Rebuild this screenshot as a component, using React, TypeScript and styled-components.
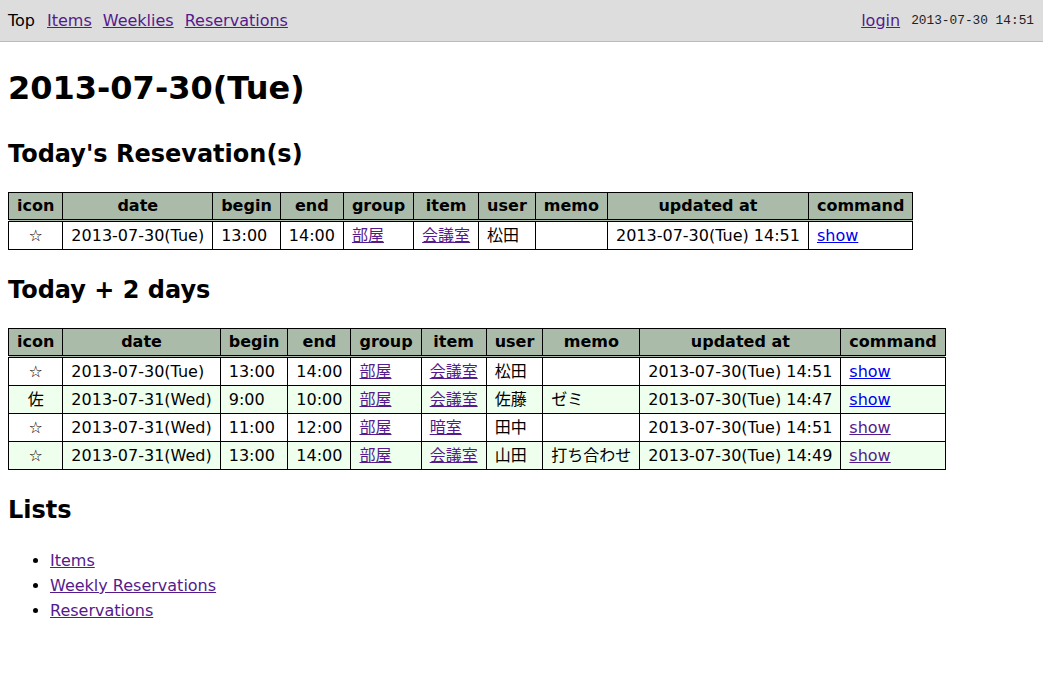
import React from "react";
import styled, { createGlobalStyle } from "styled-components";

const GlobalStyle = createGlobalStyle`
  body {
    margin: 0;
    background: #fff;
    color: #000;
    font-family: "DejaVu Sans", "Noto Sans CJK JP", sans-serif;
    font-size: 16px;
    line-height: 1.5;
  }
`;

const NavBar = styled.div`
  display: flex;
  justify-content: space-between;
  align-items: center;
  height: 41px;
  padding: 0 9px 0 8px;
  background: #dddddd;
  border-bottom: 1px solid #bbbbbb;
`;

const NavGroup = styled.div`
  display: flex;
  align-items: center;
  gap: 11px;
`;

const NavTop = styled.span`
  margin-right: 1px;
`;

const Link = styled.a<{ $fresh?: boolean }>`
  color: ${(p) => (p.$fresh ? "#0000ee" : "#551a8b")};
  text-decoration: underline;
  cursor: pointer;
`;

const Clock = styled.span`
  font-family: "Liberation Mono", monospace;
  font-size: 12.8px;
  color: #222;
`;

const Content = styled.div`
  padding: 0 8px;
`;

const Title = styled.h1`
  font-size: 32px;
  line-height: 48px;
  margin: 22px 0 24px;
`;

const Heading = styled.h2`
  font-size: 24px;
  line-height: 36px;
  margin: 0 0 20px;
`;

const Table = styled.table`
  border-collapse: collapse;
  border: 1px solid #000;
  margin-bottom: 22px;
`;

const Th = styled.th`
  background: #aabbaa;
  border: 1px solid #000;
  border-bottom: 3px double #000;
  padding: 1px 8px;
  font-weight: bold;
  line-height: 24px;
  white-space: nowrap;
`;

const Row = styled.tr<{ $alt?: boolean }>`
  background: ${(p) => (p.$alt ? "#eeffee" : "#ffffff")};
`;

const Td = styled.td<{ $center?: boolean }>`
  border: 1px solid #000;
  padding: 1px 8px;
  line-height: 25px;
  text-align: ${(p) => (p.$center ? "center" : "left")};
  white-space: nowrap;
`;

const List = styled.ul`
  margin: 0;
  padding-left: 42px;
  line-height: 25px;
`;

type Reservation = {
  icon: string;
  date: string;
  begin: string;
  end: string;
  item: string;
  user: string;
  memo: string;
  updated: string;
  fresh: boolean;
};

const today: Reservation[] = [
  { icon: "☆", date: "2013-07-30(Tue)", begin: "13:00", end: "14:00", item: "会議室", user: "松田", memo: "", updated: "2013-07-30(Tue) 14:51", fresh: true },
];

const upcoming: Reservation[] = [
  { icon: "☆", date: "2013-07-30(Tue)", begin: "13:00", end: "14:00", item: "会議室", user: "松田", memo: "", updated: "2013-07-30(Tue) 14:51", fresh: true },
  { icon: "佐", date: "2013-07-31(Wed)", begin: "9:00", end: "10:00", item: "会議室", user: "佐藤", memo: "ゼミ", updated: "2013-07-30(Tue) 14:47", fresh: true },
  { icon: "☆", date: "2013-07-31(Wed)", begin: "11:00", end: "12:00", item: "暗室", user: "田中", memo: "", updated: "2013-07-30(Tue) 14:51", fresh: false },
  { icon: "☆", date: "2013-07-31(Wed)", begin: "13:00", end: "14:00", item: "会議室", user: "山田", memo: "打ち合わせ", updated: "2013-07-30(Tue) 14:49", fresh: false },
];

const columns = ["icon", "date", "begin", "end", "group", "item", "user", "memo", "updated at", "command"];

const ReservationTable = ({ rows }: { rows: Reservation[] }) => (
  <Table>
    <thead>
      <tr>
        {columns.map((c) => (
          <Th key={c}>{c}</Th>
        ))}
      </tr>
    </thead>
    <tbody>
      {rows.map((r, i) => (
        <Row key={i} $alt={i % 2 === 1}>
          <Td $center>{r.icon}</Td>
          <Td>{r.date}</Td>
          <Td>{r.begin}</Td>
          <Td>{r.end}</Td>
          <Td>
            <Link>部屋</Link>
          </Td>
          <Td>
            <Link>{r.item}</Link>
          </Td>
          <Td>{r.user}</Td>
          <Td>{r.memo}</Td>
          <Td>{r.updated}</Td>
          <Td>
            <Link $fresh={r.fresh}>show</Link>
          </Td>
        </Row>
      ))}
    </tbody>
  </Table>
);

const App = () => {
  return (
    <>
      <GlobalStyle />
      <NavBar>
        <NavGroup>
          <NavTop>Top</NavTop>
          <Link>Items</Link>
          <Link>Weeklies</Link>
          <Link>Reservations</Link>
        </NavGroup>
        <NavGroup>
          <Link>login</Link>
          <Clock>2013-07-30 14:51</Clock>
        </NavGroup>
      </NavBar>
      <Content>
        <Title>2013-07-30(Tue)</Title>
        <Heading>Today's Resevation(s)</Heading>
        <ReservationTable rows={today} />
        <Heading>Today + 2 days</Heading>
        <ReservationTable rows={upcoming} />
        <Heading>Lists</Heading>
        <List>
          <li>
            <Link>Items</Link>
          </li>
          <li>
            <Link>Weekly Reservations</Link>
          </li>
          <li>
            <Link>Reservations</Link>
          </li>
        </List>
      </Content>
    </>
  );
};

export default App;
